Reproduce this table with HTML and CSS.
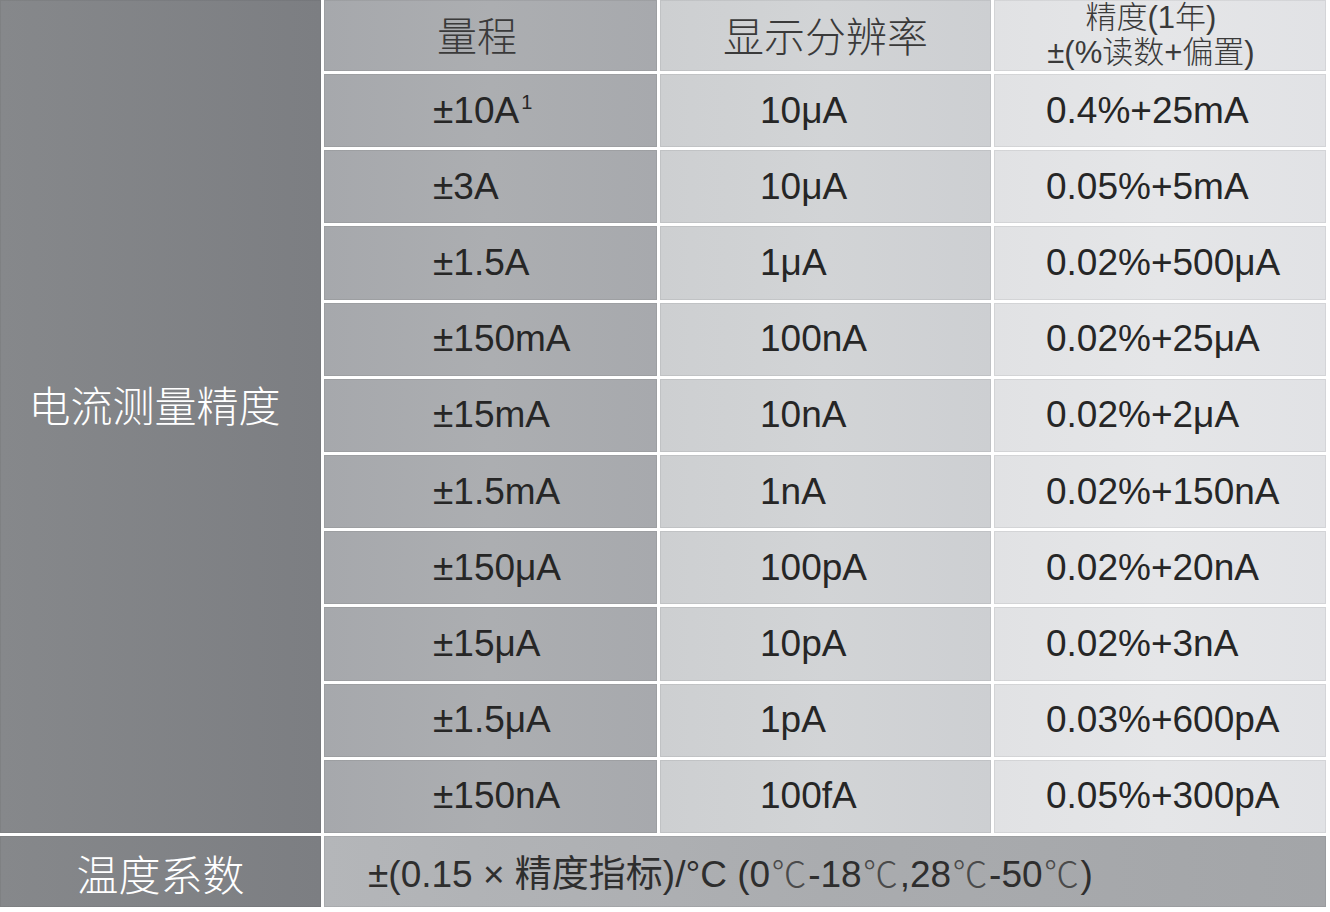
FILE: index.html
```html
<!DOCTYPE html>
<html lang="zh-CN">
<head>
<meta charset="utf-8">
<title>电流测量精度</title>
<link rel="stylesheet" href="styles.css">
</head>
<body>
<div class="spec">
  <div class="side side-main">电流测量精度</div>

  <div class="cell c1 head"><span class="h1">量程</span></div>
  <div class="cell c2 head center"><span class="h2">显示分辨率</span></div>
  <div class="cell c3 head center"><span class="h3">精度(1年)<br>±(%读数+偏置)</span></div>

  <div class="cell c1"><span>±10A<sup class="sup">1</sup></span></div><div class="cell c2">10μA</div><div class="cell c3">0.4%+25mA</div>
  <div class="cell c1">±3A</div><div class="cell c2">10μA</div><div class="cell c3">0.05%+5mA</div>
  <div class="cell c1">±1.5A</div><div class="cell c2">1μA</div><div class="cell c3">0.02%+500μA</div>
  <div class="cell c1">±150mA</div><div class="cell c2">100nA</div><div class="cell c3">0.02%+25μA</div>
  <div class="cell c1">±15mA</div><div class="cell c2">10nA</div><div class="cell c3">0.02%+2μA</div>
  <div class="cell c1">±1.5mA</div><div class="cell c2">1nA</div><div class="cell c3">0.02%+150nA</div>
  <div class="cell c1">±150μA</div><div class="cell c2">100pA</div><div class="cell c3">0.02%+20nA</div>
  <div class="cell c1">±15μA</div><div class="cell c2">10pA</div><div class="cell c3">0.02%+3nA</div>
  <div class="cell c1">±1.5μA</div><div class="cell c2">1pA</div><div class="cell c3">0.03%+600pA</div>
  <div class="cell c1">±150nA</div><div class="cell c2">100fA</div><div class="cell c3">0.05%+300pA</div>

  <div class="side side-foot">温度系数</div>
  <div class="cell foot"><span>±(0.15 × 精度指标)/°C (0<span class="deg">℃</span>-18<span class="deg">℃</span>,28<span class="deg">℃</span>-50<span class="deg">℃</span>)</span></div>
</div>
</body>
</html>
```
FILE: styles.css
```css
html, body {
  margin: 0;
  padding: 0;
  background: #ffffff;
}
body {
  width: 1330px;
  height: 912px;
  overflow: hidden;
  font-family: "Liberation Sans", "Noto Sans CJK SC", sans-serif;
}
.spec {
  display: grid;
  width: 1326px;
  height: 907px;
  grid-template-columns: 321px 333px 331px 332px;
  grid-template-rows: 71px repeat(10, 1fr) 71px;
  gap: 3px;
  background: #ffffff;
}
.side {
  display: flex;
  align-items: center;
  justify-content: center;
  color: #ffffff;
  font-family: "Noto Sans CJK SC", sans-serif;
  font-weight: 300;
  font-size: 42px;
  background: linear-gradient(to right, #86888b, #7c7e82);
  box-shadow: inset 0 0 0 1px rgba(0,0,0,0.05);
}
.side-main {
  grid-column: 1;
  grid-row: 1 / 12;
  padding-bottom: 26px;
  padding-right: 12px;
}
.side-foot {
  grid-column: 1;
  grid-row: 12;
  padding-top: 2px;
}
.cell {
  display: flex;
  align-items: center;
  color: #262626;
  font-size: 37px;
  box-shadow: inset 0 0 0 1px rgba(0,0,0,0.06);
  overflow: hidden;
  white-space: nowrap;
}
.sup {
  font-size: 20px;
  vertical-align: 14px;
  line-height: 0;
  margin-left: 2px;
}
.c1 {
  background: linear-gradient(to right, #a6a8ac, #acaeb1 50%, #a7a9ad);
  padding-left: 109px;
}
.c2 {
  background: linear-gradient(to right, #cdcfd1, #d2d4d6 50%, #cdcfd2);
  padding-left: 100px;
}
.c3 {
  background: linear-gradient(to right, #e1e2e4, #e5e6e8 50%, #e1e2e5);
  padding-left: 52px;
}
.head {
  color: #3a3a3a;
  font-family: "Noto Sans CJK SC", sans-serif;
  font-weight: 300;
}
.head.center {
  justify-content: center;
  padding-left: 0;
}
.h1 {
  font-size: 40px;
  padding-left: 4px;
  margin-top: -4px;
}
.h2 {
  font-size: 41px;
  margin-top: -4px;
}
.h3 {
  font-size: 31px;
  line-height: 35px;
  text-align: center;
  margin-top: -2px;
  margin-right: 18px;
  font-family: "Liberation Sans", "Noto Sans CJK SC", sans-serif;
}
.foot {
  grid-column: 2 / 5;
  grid-row: 12;
  padding-left: 44px;
  color: #2e2e2e;
  background: linear-gradient(to right, #b4b6b9, #aaacaf 50%, #a3a5a8);
  font-size: 37px;
}
.deg {
  font-family: "Noto Sans CJK SC", sans-serif;
  font-weight: 300;
  font-size: 35px;
  color: #4a4a4a;
  margin: 0 1.5px;
}
```
